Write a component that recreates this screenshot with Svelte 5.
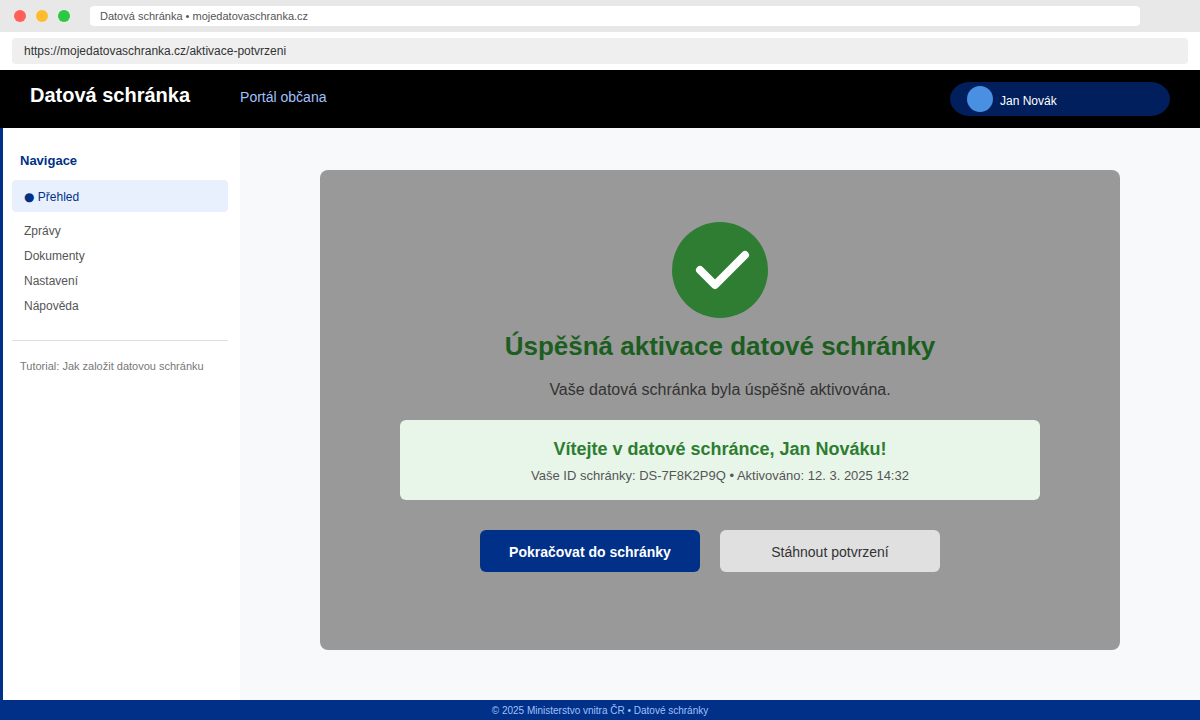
<script lang="ts">
    interface NavItem {
        label: string
        href: string
    }

    const navItems: NavItem[] = [
        { label: 'Zprávy', href: '#zpravy' },
        { label: 'Dokumenty', href: '#dokumenty' },
        { label: 'Nastavení', href: '#nastaveni' },
        { label: 'Nápověda', href: '#napoveda' },
    ]

    const user = 'Jan Novák'
    const boxId = 'DS-7F8K2P9Q'
    const activatedAt = '12. 3. 2025 14:32'

    let url = $state('https://mojedatovaschranka.cz/aktivace-potvrzeni')
</script>

<div class="page">
    <div class="title-bar">
        <div class="window-dots">
            <span class="window-dot close"></span>
            <span class="window-dot minimize"></span>
            <span class="window-dot maximize"></span>
        </div>
        <div class="tab">Datová schránka • mojedatovaschranka.cz</div>
    </div>

    <div class="address-bar">
        <input type="text" aria-label="Adresa" spellcheck="false" bind:value={url} />
    </div>

    <header>
        <h1>Datová schránka</h1>
        <a class="portal" href="#portal">Portál občana</a>
        <button class="user" type="button">
            <span class="avatar"></span>
            <span class="user-name">{user}</span>
        </button>
    </header>

    <div class="body">
        <aside>
            <h2>Navigace</h2>
            <nav>
                <a class="nav-active" href="#prehled" aria-current="page">
                    <span class="bullet">●</span> Přehled
                </a>
                <ul>
                    {#each navItems as item (item.href)}
                        <li><a href={item.href}>{item.label}</a></li>
                    {/each}
                </ul>
            </nav>
            <hr />
            <p class="tutorial">Tutorial: Jak založit datovou schránku</p>
        </aside>

        <main>
            <section class="card">
                <svg class="check" width="96" height="96" viewBox="0 0 96 96" fill="none" aria-hidden="true">
                    <circle cx="48" cy="48" r="48" fill="#2e7d32" />
                    <path
                        d="M28 48l15 15 30-30"
                        stroke="#fff"
                        stroke-width="8"
                        stroke-linecap="round"
                        stroke-linejoin="round"
                    />
                </svg>
                <h2>Úspěšná aktivace datové schránky</h2>
                <p class="lead">Vaše datová schránka byla úspěšně aktivována.</p>

                <div class="welcome">
                    <h3>Vítejte v datové schránce, Jan Nováku!</h3>
                    <p>Vaše ID schránky: {boxId} • Aktivováno: {activatedAt}</p>
                </div>

                <div class="actions">
                    <button class="primary" type="button">Pokračovat do schránky</button>
                    <button type="button">Stáhnout potvrzení</button>
                </div>
            </section>
        </main>
    </div>

    <footer>© 2025 Ministerstvo vnitra ČR • Datové schránky</footer>
</div>

<style>
    :global(body) {
        margin: 0;
    }

    .page {
        --color-brand: #003087;
        --color-success: #2e7d32;
        --color-text: #333;
        --color-text-secondary: #555;

        display: flex;
        flex-direction: column;
        min-height: 100vh;
        background: #f8f9fb;
        color: var(--color-text);
        font-family: 'Liberation Sans', Arial, Helvetica, sans-serif;
        font-size: 12px;
    }

    .page * {
        box-sizing: border-box;
    }

    h1,
    h2,
    h3,
    p,
    ul {
        margin: 0;
        padding: 0;
    }

    a {
        color: inherit;
        text-decoration: none;
    }

    button,
    input {
        border: none;
        font-family: inherit;
    }

    button {
        cursor: pointer;
    }

    /* Browser chrome */
    .title-bar {
        display: flex;
        align-items: center;
        gap: 20px;
        padding: 6px 60px 6px 14px;
        background: #e8e8e8;
    }

    .window-dots {
        display: flex;
        gap: 10px;
    }

    .window-dot {
        width: 12px;
        height: 12px;
        border-radius: 50%;
    }

    .close {
        background: #ff5f57;
    }

    .minimize {
        background: #ffbd2e;
    }

    .maximize {
        background: #28ca42;
    }

    .tab {
        flex: 1;
        padding: 0 10px;
        border-radius: 4px;
        background: #fff;
        color: var(--color-text-secondary);
        font-size: 11px;
        line-height: 20px;
    }

    .address-bar {
        display: flex;
        padding: 6px 12px;
        background: #fff;
    }

    .address-bar input {
        flex: 1;
        height: 26px;
        padding: 0 12px;
        border-radius: 4px;
        background: #efefef;
        color: var(--color-text);
        font-size: 12px;
    }

    /* Portal header */
    header {
        display: flex;
        align-items: baseline;
        padding: 12px 30px;
        background: #000;
    }

    h1 {
        color: #fff;
        font-size: 20px;
        line-height: 26px;
    }

    .portal {
        margin-left: 50px;
        color: #a0c0ff;
        font-size: 14px;
    }

    .user {
        display: flex;
        align-items: flex-end;
        align-self: flex-start;
        gap: 7px;
        width: 220px;
        margin-left: auto;
        padding: 4px 17px;
        border-radius: 20px / 17px;
        background: #001f5c;
        color: #fff;
        font-size: 12px;
        line-height: 22px;
    }

    .avatar {
        width: 26px;
        height: 26px;
        border-radius: 50%;
        background: #4a90e2;
    }

    .body {
        display: flex;
        flex: 1;
    }

    aside {
        flex: 0 0 240px;
        padding: 25px 12px 25px 9px;
        border-left: 3px solid var(--color-brand);
        background: #fff;
    }

    aside h2 {
        margin-bottom: 11px;
        padding: 0 8px;
        color: var(--color-brand);
        font-size: 13px;
        line-height: 16px;
    }

    .nav-active {
        display: block;
        padding: 2px 12px 0;
        border-radius: 4px;
        background: #e8f0fe;
        color: var(--color-brand);
        line-height: 30px;
    }

    .bullet {
        font-family: 'DejaVu Sans', sans-serif;
        line-height: 1;
    }

    ul {
        margin-top: 7px;
        color: var(--color-text-secondary);
        line-height: 25px;
        list-style: none;
    }

    li a {
        display: block;
        padding: 0 12px;
    }

    hr {
        height: 1px;
        margin: 21px 0 17px;
        border: none;
        background: #ddd;
    }

    .tutorial {
        padding: 0 8px;
        color: #777;
        font-size: 11px;
        line-height: 16px;
    }

    main {
        flex: 1;
        padding: 42px 80px 50px;
    }

    .card {
        display: flex;
        flex-direction: column;
        align-items: center;
        padding: 52px 80px 78px;
        border-radius: 8px;
        background: #999;
        text-align: center;
    }

    .card h2 {
        margin-top: 12px;
        color: #1b5e20;
        font-size: 26px;
        line-height: 32px;
    }

    .lead {
        margin-top: 18px;
        font-size: 16px;
        line-height: 20px;
    }

    .welcome {
        align-self: stretch;
        margin-top: 20px;
        padding: 17px 20px 15px;
        border-radius: 6px;
        background: #e8f5e9;
    }

    h3 {
        color: var(--color-success);
        font-size: 18px;
        line-height: 24px;
    }

    .welcome p {
        margin-top: 6px;
        color: var(--color-text-secondary);
        font-size: 13px;
        line-height: 18px;
    }

    .actions {
        display: flex;
        align-self: stretch;
        justify-content: center;
        gap: 20px;
        margin-top: 30px;
        padding-right: 20px;
    }

    .actions button {
        width: 220px;
        height: 42px;
        padding: 2px 6px 0;
        border-radius: 6px;
        background: #e0e0e0;
        color: var(--color-text);
        font-size: 14px;
    }

    .actions .primary {
        background: var(--color-brand);
        color: #fff;
        font-weight: bold;
    }

    footer {
        padding-top: 2px;
        background: var(--color-brand);
        color: #a0c0ff;
        font-size: 10px;
        line-height: 18px;
        text-align: center;
    }
</style>
